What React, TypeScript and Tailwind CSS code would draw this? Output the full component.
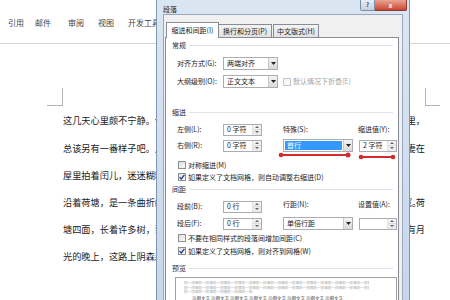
import React from "react";

function Arrow({ up = false, color = "#222", w = 5, h = 3 }: { up?: boolean; color?: string; w?: number; h?: number }) {
  return (
    <svg width={w} height={h} viewBox={`0 0 ${w} ${h}`} className="block">
      <path d={up ? `M0 ${h}H${w}L${w / 2} 0z` : `M0 0H${w}L${w / 2} ${h}z`} fill={color} />
    </svg>
  );
}

function Select({ width, text, highlight }: { width: string; text: string; highlight?: boolean }) {
  return (
    <div className={`flex h-[13px] shrink-0 border border-[#abadb3] bg-white ${width}`}>
      <div className="flex flex-1 items-center p-[1px]">
        <div
          className={`flex h-full flex-1 items-center pl-[2px] ${
            highlight ? "bg-[#3399ff] text-white" : "text-[#1b1b1b]"
          }`}
        >
          {text}
        </div>
      </div>
      <div className="flex w-[9px] items-center justify-center border-l border-[#c9c9c9] bg-gradient-to-b from-[#f4f4f4] to-[#d9d9d9]">
        <Arrow w={5} h={3} />
      </div>
    </div>
  );
}

function Spin({ width, text }: { width: string; text: string }) {
  return (
    <div className={`flex h-[12px] shrink-0 border border-[#abadb3] bg-white ${width}`}>
      <div className="flex flex-1 items-center pl-[3px] text-[#1b1b1b]">{text}</div>
      <div className="flex w-[9px] flex-col border-l border-[#e2e2e2]">
        <div className="flex flex-1 items-center justify-center bg-[#f2f2f2]">
          <Arrow up color="#666" w={4} h={2} />
        </div>
        <div className="flex flex-1 items-center justify-center border-t border-[#dadada] bg-[#ebebeb]">
          <Arrow color="#666" w={4} h={2} />
        </div>
      </div>
    </div>
  );
}

function Check({ checked, disabled }: { checked?: boolean; disabled?: boolean }) {
  return (
    <div
      className={`flex h-[8px] w-[8px] shrink-0 items-center justify-center border bg-gradient-to-br ${
        disabled ? "border-[#c5c5c5] from-[#f4f4f4] to-[#fcfcfc]" : "border-[#8e8f8f] from-[#dedede] to-[#fbfbfb]"
      }`}
    >
      {checked && (
        <svg width="6" height="6" viewBox="0 0 6 6" className="block">
          <path d="M0.6 3.1 L2.3 4.9 L5.4 0.9" stroke="#1d3f88" strokeWidth="1.3" fill="none" />
        </svg>
      )}
    </div>
  );
}

function Group({ title, h }: { title: string; h: string }) {
  return (
    <div className={`flex items-center pl-[6px] pr-[5px] ${h}`}>
      <span className="text-[#1e2b3c]">{title}</span>
      <div className="ml-[3px] h-px flex-1 bg-[#dfe3e8]" />
    </div>
  );
}

function CheckRow({ text, checked, mt }: { text: string; checked?: boolean; mt: string }) {
  return (
    <div className={`flex h-[12px] items-center pl-[12px] ${mt}`}>
      <Check checked={checked} />
      <span className="ml-[2px] whitespace-nowrap">{text}</span>
    </div>
  );
}

const lines: [string, string][] = [
  ["这几天心里颇不宁静。今晚在院子里坐着乘凉，忽然想起日日走过的荷塘，在这满月的光", "里，"],
  ["总该另有一番样子吧。月亮渐渐地升高了，墙外马路上孩子们的欢笑，已经听不见了；", "妻在"],
  ["屋里拍着闰儿，迷迷糊糊地哼着眠歌。我悄悄地披了大衣，带上门出去。", ""],
  ["沿着荷塘，是一条曲折的小煤屑路。这是一条幽僻的路；白天也少人走，夜晚更加寂寞。", "荷"],
  ["塘四面，长着许多树，蓊蓊郁郁的。路的一旁，是些杨柳，和一些不知道名字的树。没", "有月"],
  ["光的晚上，这路上阴森森的，有些怕人。今晚却很好，虽然月光也还是淡淡的。", ""],
];

export default function App() {
  return (
    <div className="relative h-[300px] w-[450px] overflow-hidden bg-white font-['Noto_Sans_CJK_SC','Noto_Sans',sans-serif]">
      {/* Word ribbon tabs */}
      <div className="flex h-[44px] items-start border-b border-[#d4d4d4] pl-[8px] pt-[18px] text-[8px] leading-[10px] text-[#444]">
        <span>引用</span>
        <span className="ml-[11px]">邮件</span>
        <span className="ml-[17px]">审阅</span>
        <span className="ml-[14px]">视图</span>
        <span className="ml-[14px] whitespace-nowrap">开发工具</span>
      </div>

      {/* Document page */}
      <div className="pt-[44px]">
        <div className="flex justify-between pl-[47px] pr-[10px]">
          <div className="h-[18px] w-[16px] border-b border-r border-[#b4b4b4]" />
          <div className="h-[18px] w-[15px] border-b border-l border-[#b4b4b4]" />
        </div>
        <div className="mt-[1.4px] w-[425px] pl-[63px] text-[9.2px] text-[#222]">
          {lines.map(([l, r], i) => (
            <div key={i} className="flex h-[27.2px] items-center justify-between leading-[27.2px]">
              <span className="min-w-0 flex-1 overflow-hidden whitespace-nowrap">{l}</span>
              <span className="shrink-0 whitespace-nowrap">{r}</span>
            </div>
          ))}
        </div>
      </div>

      {/* Paragraph dialog */}
      <div className="absolute left-[156px] top-0 flex h-[300px] w-[254px] flex-col border-x border-[#8196b3] bg-gradient-to-b from-[#dbe6f3] to-[#c6d7ea]">
        <div className="flex h-[14px] items-start">
          <span className="ml-[6px] mt-[4px] text-[7px] leading-[10px] text-[#1a1a1a]">段落</span>
          <div className="ml-auto mr-[2px] flex h-[11px]">
            <div className="flex w-[15px] items-center justify-center rounded-bl-[2px] border border-t-0 border-[#7d8ea6] bg-gradient-to-b from-[#e8eef6] to-[#c3d1e3] text-[6px] font-bold leading-none text-[#39506e]">
              ?
            </div>
            <div className="flex w-[32px] items-center justify-center rounded-br-[2px] border border-l-0 border-t-0 border-[#8a3a2e] bg-gradient-to-b from-[#e8a493] to-[#c7432e] text-[7px] font-bold leading-none text-white">
              x
            </div>
          </div>
        </div>

        <div className="mx-[6px] flex flex-1 flex-col border border-[#99aac0] bg-[#f0f0f0] pt-[7px] text-[7px] leading-[9px] text-[#1b1b1b]">
          {/* tabs */}
          <div className="relative z-10 -mb-px flex items-end pl-[2px]">
            <div className="flex h-[16px] w-[53px] items-center justify-center border border-b-0 border-[#898c95] bg-white">
              缩进和间距(I)
            </div>
            <div className="flex h-[14px] w-[53px] items-center justify-center border border-b-[#898c95] border-l-0 border-[#898c95] bg-gradient-to-b from-[#f3f3f3] to-[#e1e1e1]">
              换行和分页(P)
            </div>
            <div className="ml-[1px] flex h-[14px] w-[46px] items-center justify-center border border-[#898c95] bg-gradient-to-b from-[#f3f3f3] to-[#e1e1e1]">
              中文版式(H)
            </div>
          </div>

          {/* panel */}
          <div className="ml-[1px] mr-[3px] flex flex-1 flex-col border border-[#898c95] bg-white">
            <Group title="常规" h="h-[14px]" />

            <div className="mt-[5px] flex h-[13px] items-center pl-[11px]">
              <span className="w-[46px] shrink-0 whitespace-nowrap">对齐方式(G):</span>
              <Select width="w-[55px]" text="两端对齐" />
            </div>
            <div className="mt-[5px] flex h-[13px] items-center pl-[11px]">
              <span className="w-[46px] shrink-0 whitespace-nowrap">大纲级别(O):</span>
              <Select width="w-[55px]" text="正文文本" />
              <div className="ml-[5px] flex items-center">
                <Check disabled />
                <span className="ml-[2px] whitespace-nowrap text-[#a3a3a3]">默认情况下折叠(E)</span>
              </div>
            </div>

            <Group title="缩进" h="mt-[17px] h-[14px]" />

            <div className="mt-[4px] flex h-[13px] items-center pl-[11px]">
              <span className="w-[46px] shrink-0">左侧(L):</span>
              <Spin width="w-[39px]" text="0 字符" />
              <span className="ml-[21px] w-[70px] shrink-0">特殊(S):</span>
              <span className="ml-[5px] w-[39px] shrink-0 whitespace-nowrap">缩进值(Y):</span>
            </div>
            <div className="mt-[3px] flex h-[13px] items-center pl-[11px]">
              <span className="w-[46px] shrink-0">右侧(R):</span>
              <Spin width="w-[39px]" text="0 字符" />
              <div className="ml-[21px]">
                <Select width="w-[70px]" text="首行" highlight />
              </div>
              <div className="ml-[6px]">
                <Spin width="w-[38px]" text="2 字符" />
              </div>
            </div>

            <CheckRow text="对称缩进(M)" mt="mt-[7px]" />
            <CheckRow text="如果定义了文档网格，则自动调整右缩进(D)" checked mt="mt-0" />

            <Group title="间距" h="h-[12px]" />

            <div className="mt-[5px] flex h-[13px] items-center pl-[11px]">
              <span className="w-[46px] shrink-0">段前(B):</span>
              <Spin width="w-[39px]" text="0 行" />
              <span className="ml-[21px] w-[70px] shrink-0 -translate-y-[2px]">行距(N):</span>
              <span className="ml-[5px] w-[39px] shrink-0 -translate-y-[2px] whitespace-nowrap">设置值(A):</span>
            </div>
            <div className="mt-[4px] flex h-[13px] items-center pl-[11px]">
              <span className="w-[46px] shrink-0">段后(F):</span>
              <Spin width="w-[39px]" text="0 行" />
              <div className="ml-[21px]">
                <Select width="w-[70px]" text="单倍行距" />
              </div>
              <div className="ml-[6px]">
                <Spin width="w-[38px]" text="" />
              </div>
            </div>

            <CheckRow text="不要在相同样式的段落间增加间距(C)" mt="mt-[2px]" />
            <CheckRow text="如果定义了文档网格，则对齐到网格(W)" checked mt="mt-[1px]" />

            <Group title="预览" h="mt-[5px] h-[12px]" />

            <div className="ml-[9px] mt-[3px] h-[40px] w-[222px] overflow-hidden border border-[#a0a0a0] bg-white pl-[8px] pt-[3px]">
              <div className="w-[185px] overflow-hidden whitespace-nowrap text-[3.6px] leading-[4.5px] text-[#a8a8a8]">
                前一段落前一段落前一段落前一段落前一段落前一段落前一段落前一段落前一段落前一段落前一段落前一段落前一段落前一段落
              </div>
              <div className="w-[185px] overflow-hidden whitespace-nowrap text-[3.6px] leading-[4.5px] text-[#a8a8a8]">
                前一段落前一段落前一段落前一段落前一段落前一段落前一段落前一段落前一段落前一段落前一段落前一段落前一段落前一段落
              </div>
              <div className="whitespace-nowrap text-[3.6px] leading-[4.5px] text-[#a8a8a8]">前一段落前一段落前一段落前一段落前一段</div>
              <div className="whitespace-nowrap pl-[8px] text-[4.5px] leading-[6px] text-[#333]">
                示例文字 示例文字 示例文字 示例文字 示例文字 示例文字 示例文字 示例文字
              </div>
            </div>
          </div>
        </div>
      </div>

      {/* red annotation marks */}
      <svg className="pointer-events-none absolute left-0 top-0" width="450" height="300">
        <line x1="281" y1="155" x2="348" y2="155" stroke="#d12b2b" strokeWidth="2" />
        <circle cx="281" cy="155" r="2.3" fill="#d12b2b" />
        <circle cx="348" cy="155" r="2.5" fill="#d12b2b" />
        <line x1="361" y1="157" x2="393" y2="157" stroke="#d12b2b" strokeWidth="2" />
        <circle cx="361" cy="157" r="2.3" fill="#d12b2b" />
        <circle cx="393" cy="157" r="2.3" fill="#d12b2b" />
      </svg>
    </div>
  );
}
